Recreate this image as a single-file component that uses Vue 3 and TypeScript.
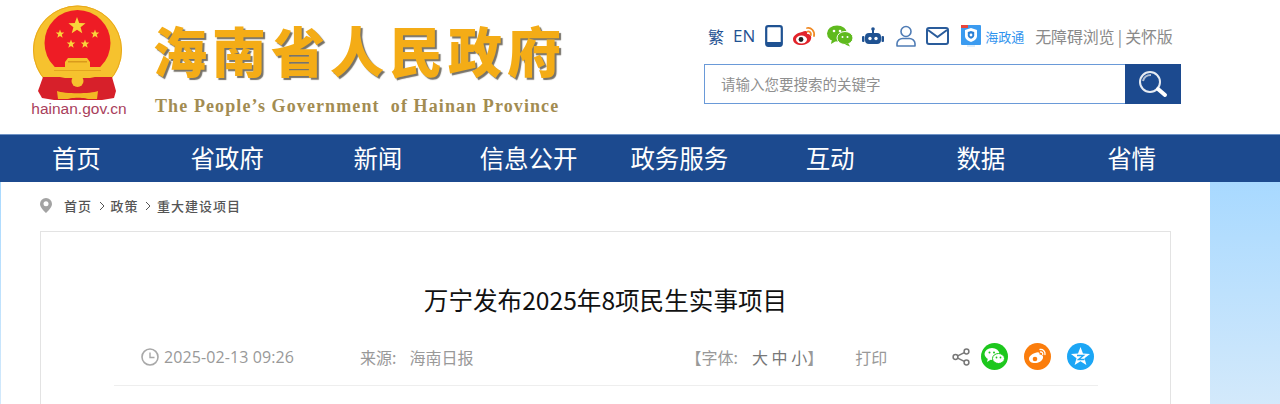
<template>
  <div class="page">
    <header class="header">
      <div class="emblem">
        <svg class="emblem-art" width="92" height="96" viewBox="0 0 92 96">
          <circle cx="45.500" cy="45" r="44.500" fill="#f6c22e" />
          <circle cx="45.500" cy="45" r="44" fill="none" stroke="#e8a91c" stroke-width="1" />
          <circle cx="45.500" cy="38" r="33" fill="#ee1c25" />
          <polygon :points="star(45, 21, 9)" fill="#f9d43a" />
          <polygon :points="star(28, 29, 4.500)" fill="#f9d43a" />
          <polygon :points="star(63, 29, 4.500)" fill="#f9d43a" />
          <polygon :points="star(39, 39, 4.500)" fill="#f9d43a" />
          <polygon :points="star(53, 39, 4.500)" fill="#f9d43a" />
          <path d="M11 72h69l4 14-2 7-12 2H22l-12-2-4-7z" fill="#d7202a" />
          <path d="M33 62v-5l3-4h19l3 4v5z" fill="#f6c22e" />
          <path d="M36 56h19v1.500H36z" fill="#d99a1c" />
          <path d="M18 62h55l5 5c-8 3-13 5-20 6H33c-7-1-12-3-20-6z" fill="#f6c22e" />
          <path d="M22 65h47v1H22z" fill="#e2a51f" />
          <circle cx="45.500" cy="76" r="6" fill="#f6c22e" />
          <path d="M25 86c7 3 34 3 41 0l-1 8H26z" fill="#f2b824" />
          <path d="M34 95c3-3 21-3 24 0z" fill="#d7202a" />
        </svg>
        <span class="emblem-url">hainan.gov.cn</span>
      </div>
      <div class="brand">
        <div class="brand-cn">海南省人民政府</div>
        <div class="brand-en">The People’s Government&nbsp; of Hainan Province</div>
      </div>
      <div class="tools">
        <div class="tool-row">
          <a class="lang">繁</a>
          <a class="lang en">EN</a>
          <svg class="ic tablet" width="18" height="22" viewBox="0 0 18 22">
            <rect x="1.200" y="1.200" width="15.600" height="19.600" rx="2" fill="none" stroke="#1f5292" stroke-width="2.200" />
            <rect x="1" y="17" width="16" height="4" rx="1" fill="#1f5292" />
          </svg>
          <svg class="ic weibo" width="24" height="22" viewBox="0 0 24 22">
            <path d="M10 7c4-2 6-1 5 2 3 0 5 2 4 5-1 4-6 6-10 6-4 0-8-2-8-6 0-3 4-6 9-7z" fill="#e2232a" />
            <ellipse cx="9.500" cy="14.500" rx="5.500" ry="4" fill="#fff" />
            <circle cx="9" cy="14.500" r="2.400" fill="#222" />
            <path d="M15 3c4-1 8 3 7 8M15.500 6.500c2-.5 3.800 1.200 3.400 3.500" fill="none" stroke="#f08a24" stroke-width="1.800" stroke-linecap="round" />
          </svg>
          <svg class="ic wechat" width="26" height="22" viewBox="0 0 26 22">
            <ellipse cx="10" cy="8.500" rx="10" ry="8" fill="#5fba1e" />
            <path d="M5 14l-1 5 5-3z" fill="#5fba1e" />
            <ellipse cx="18" cy="13" rx="8" ry="6.500" fill="#5fba1e" stroke="#fff" stroke-width="1" />
            <path d="M21 18l2 3.500-5-2z" fill="#5fba1e" />
            <circle cx="7" cy="6" r="1.300" fill="#fff" />
            <circle cx="13" cy="6" r="1.300" fill="#fff" />
            <circle cx="15.500" cy="12" r="1" fill="#fff" />
            <circle cx="20.500" cy="12" r="1" fill="#fff" />
          </svg>
          <svg class="ic robot" width="22" height="18" viewBox="0 0 22 18">
            <circle cx="11" cy="2" r="1.800" fill="#1f5292" />
            <rect x="10" y="3" width="2" height="4" fill="#1f5292" />
            <rect x="3" y="6" width="16" height="11" rx="4" fill="#1f5292" />
            <rect x="0" y="9" width="2.500" height="6" rx="1" fill="#1f5292" />
            <rect x="19.500" y="9" width="2.500" height="6" rx="1" fill="#1f5292" />
            <circle cx="8" cy="11.500" r="1.700" fill="#fff" />
            <circle cx="14" cy="11.500" r="1.700" fill="#fff" />
          </svg>
          <svg class="ic user" width="20" height="22" viewBox="0 0 20 22">
            <circle cx="10" cy="6.500" r="5" fill="none" stroke="#4f7cb5" stroke-width="1.600" />
            <path d="M1 21v-2.500c0-3 3-5 5.500-5h7c2.500 0 5.500 2 5.500 5V21z" fill="none" stroke="#4f7cb5" stroke-width="1.600" stroke-linejoin="round" />
          </svg>
          <svg class="ic mail" width="23" height="18" viewBox="0 0 23 18">
            <rect x="1" y="1" width="21" height="16" rx="2" fill="none" stroke="#2a5c9b" stroke-width="2" />
            <path d="M2 3l9.500 7L21 3" fill="none" stroke="#2a5c9b" stroke-width="2" />
          </svg>
          <svg class="ic hzt" width="20" height="22" viewBox="0 0 20 22">
            <rect width="20" height="20" rx="1" fill="#3b9bf0" />
            <rect width="7" height="3" fill="#e8453c" />
            <path d="M10 3l6 2v6c0 3-3 5-6 6-3-1-6-3-6-6V5z" fill="#fff" />
            <path d="M10 6l3.200 1v3.500c0 1.600-1.600 2.700-3.200 3.300-1.600-.6-3.200-1.700-3.200-3.300V7z" fill="#2b7fd4" />
            <circle cx="10" cy="10" r="1.400" fill="#fff" />
            <rect x="6" y="20.500" width="8" height="1" fill="#bcdcf8" />
          </svg>
          <a class="hzt-text">海政通</a>
          <a class="access">无障碍浏览 | 关怀版</a>
        </div>
        <div class="search">
          <input class="search-input" type="text" placeholder="请输入您要搜索的关键字" />
          <button class="search-btn" type="button" aria-label="搜索">
            <svg width="32" height="30" viewBox="0 0 32 30">
              <circle cx="13" cy="13" r="10" fill="none" stroke="#e6ebf2" stroke-width="2" />
              <path d="M6 12c1-4 4-6 8-6" fill="none" stroke="#aebdd3" stroke-width="2" />
              <path d="M21 20l7 6" stroke="#fff" stroke-width="4" stroke-linecap="round" />
            </svg>
          </button>
        </div>
      </div>
    </header>

    <nav class="nav">
      <div class="nav-inner">
        <a v-for="item in navItems" :key="item" class="nav-item">{{ item }}</a>
      </div>
    </nav>

    <main class="main">
      <div class="crumbs">
        <svg class="pin" width="12" height="15" viewBox="0 0 12 15">
          <path d="M6 0a6 6 0 0 1 6 6c0 3.500-4 7-6 9-2-2-6-5.500-6-9a6 6 0 0 1 6-6z" fill="#a3a3a3" />
          <circle cx="6" cy="5.800" r="2.500" fill="#fff" />
        </svg>
        <template v-for="(crumb, i) in crumbs" :key="crumb">
          <span class="crumb">{{ crumb }}</span>
          <svg v-if="i < crumbs.length - 1" class="sep" width="6" height="10" viewBox="0 0 6 10">
            <path d="M1 1l4 4-4 4" fill="none" stroke="#555" stroke-width="1" />
          </svg>
        </template>
      </div>

      <article class="card">
        <h1 class="title">万宁发布2025年8项民生实事项目</h1>
        <div class="meta">
          <svg class="clock" width="18" height="18" viewBox="0 0 18 18">
            <circle cx="9" cy="9" r="8" fill="none" stroke="#a8a8a8" stroke-width="1.600" />
            <path d="M9 4.500V9.500h4.500" fill="none" stroke="#a8a8a8" stroke-width="1.400" />
          </svg>
          <span class="date">2025-02-13 09:26</span>
          <span class="source">来源:</span>
          <span class="source-name">海南日报</span>
          <span class="font-size">【字体:</span>
          <span class="sizes">大 中 小</span>
          <span class="bracket">】</span>
          <span class="print">打印</span>
          <svg class="share" width="18" height="18" viewBox="0 0 18 18">
            <circle cx="14.500" cy="3.500" r="2.400" fill="none" stroke="#777" stroke-width="1.500" />
            <circle cx="3.500" cy="9" r="2.400" fill="none" stroke="#777" stroke-width="1.500" />
            <circle cx="14.500" cy="14.500" r="2.400" fill="none" stroke="#777" stroke-width="1.500" />
            <path d="M5.700 7.900l6.600-3.300M5.700 10.100l6.600 3.300" stroke="#777" stroke-width="1.500" />
          </svg>
          <svg class="round wx" width="27" height="27" viewBox="0 0 27 27">
            <circle cx="13.500" cy="13.500" r="13.500" fill="#1dc71d" />
            <ellipse cx="11" cy="11" rx="7.500" ry="6" fill="#fff" />
            <path d="M7 15l-1 4 4-2.500z" fill="#fff" />
            <ellipse cx="17.500" cy="15.500" rx="6" ry="5" fill="#fff" stroke="#1dc71d" stroke-width="1" />
            <circle cx="8.500" cy="9.500" r="1" fill="#1dc71d" />
            <circle cx="13" cy="9.500" r="1" fill="#1dc71d" />
            <circle cx="15.500" cy="14.500" r=".9" fill="#1dc71d" />
            <circle cx="19.500" cy="14.500" r=".9" fill="#1dc71d" />
          </svg>
          <svg class="round wb" width="27" height="27" viewBox="0 0 27 27">
            <circle cx="13.500" cy="13.500" r="13.500" fill="#fb7d0c" />
            <path d="M11 10c3-1.500 5-1 4.500 1.500 2.500 0 4 1.500 3.500 3.500-.7 3-4.500 5-8 5-3.500 0-6-1.600-6-4.300 0-2.200 2.500-4.500 6-5.700z" fill="#fff" />
            <circle cx="11" cy="16" r="2.300" fill="#fb7d0c" />
            <path d="M16 6.500c3-.5 5.500 2 5 5M16.500 9c1.500-.2 2.500 1 2.200 2.500" fill="none" stroke="#fff" stroke-width="1.300" stroke-linecap="round" />
          </svg>
          <svg class="round qz" width="27" height="27" viewBox="0 0 27 27">
            <circle cx="13.500" cy="13.500" r="13.500" fill="#1ca6f5" />
            <polygon :points="star(13.5, 14, 10)" fill="#fff" />
            <path d="M10 12.500h6.500l-5 4h6" fill="none" stroke="#1ca6f5" stroke-width="1.400" />
          </svg>
        </div>
      </article>
    </main>
  </div>
</template>

<script setup lang="ts">
const navItems = ['首页', '省政府', '新闻', '信息公开', '政务服务', '互动', '数据', '省情']
const crumbs = ['首页', '政策', '重大建设项目']

// five pointed star, used by the emblem and the qzone badge
const star = (cx: number, cy: number, r: number): string => {
  const pts: string[] = []
  for (let i = 0; i < 10; i++) {
    const radius = i % 2 === 0 ? r : r * 0.42
    const angle = -Math.PI / 2 + (i * Math.PI) / 5
    pts.push(`${(cx + radius * Math.cos(angle)).toFixed(2)},${(cy + radius * Math.sin(angle)).toFixed(2)}`)
  }
  return pts.join(' ')
}
</script>

<style scoped>
.page {
  height: 404px;
  overflow: hidden;
  font-family: "Noto Sans CJK SC", "Liberation Sans", sans-serif;
}

.header {
  display: flex;
  height: 135px;
  background: #fff;
  border-bottom: 1px solid #6f93c6;
  box-sizing: border-box;
}

.emblem {
  display: flex;
  flex-direction: column;
  align-items: center;
  width: 96px;
  margin-left: 30px;
  padding-top: 5px;
}

.emblem-url {
  margin-top: -1px;
  margin-left: 2px;
  font-family: "Liberation Sans", sans-serif;
  font-size: 15.500px;
  line-height: 17px;
  white-space: nowrap;
  color: #a9405c;
}

.brand {
  width: 420px;
  margin-left: 27px;
  padding-top: 12px;
}

.brand-cn {
  font-size: 54px;
  font-weight: 900;
  line-height: 76px;
  letter-spacing: 5px;
  color: #f4ac16;
  white-space: nowrap;
  text-shadow: 2px 2px 1px #77736a;
}

.brand-en {
  margin-top: 6px;
  margin-left: 2px;
  font-family: "Liberation Serif", serif;
  font-size: 18px;
  font-weight: 700;
  line-height: 24px;
  letter-spacing: 1.100px;
  color: #a28c52;
  white-space: nowrap;
}

.tools {
  width: 477px;
  margin-left: 131px;
  padding-top: 24px;
}

.tool-row {
  display: flex;
  align-items: center;
  height: 24px;
  margin-left: 4px;
  white-space: nowrap;
}

.lang {
  font-size: 16px;
  line-height: 24px;
  color: #1f5292;
}

.lang.en {
  margin-left: 9px;
  font-family: "Open Sans", sans-serif;
  font-size: 17px;
}

.ic {
  flex: none;
}

.tablet { margin-left: 10px; }
.weibo { margin-left: 9px; }
.wechat { margin-left: 11px; }
.robot { margin-left: 9px; }
.user { margin-left: 12px; }
.mail { margin-left: 10px; }
.hzt { margin-left: 12px; }

.hzt-text {
  margin-left: 4px;
  font-size: 13px;
  color: #2f93ee;
}

.access {
  margin-left: 11px;
  font-size: 16px;
  letter-spacing: -0.200px;
  color: #8a8a8a;
}

.search {
  display: flex;
  height: 40px;
  margin-top: 16px;
}

.search-input {
  flex: 1;
  min-width: 0;
  padding: 0 16px 2px;
  border: 1px solid #6a9ad8;
  border-right: 0;
  outline: none;
  font-family: inherit;
  font-size: 14.500px;
  background: #fff;
}

.search-input::placeholder {
  color: #8f8f8f;
  opacity: 1;
}

.search-btn {
  display: flex;
  align-items: center;
  justify-content: center;
  width: 56px;
  padding: 0;
  border: 0;
  background: #1c4a8f;
}

.nav {
  height: 47px;
  background: #1c4a8f;
}

.nav-inner {
  display: flex;
  width: 1206px;
  margin-left: 1px;
}

.nav-item {
  flex: 1;
  font-size: 24.500px;
  line-height: 46px;
  text-align: center;
  color: #fff;
}

.main {
  width: 1209px;
  height: 222px;
  margin-left: 1px;
  background: #fff;
  box-sizing: border-box;
  padding: 0 39px;
}

.crumbs {
  display: flex;
  align-items: center;
  height: 47px;
  margin-bottom: 2px;
}

.pin {
  margin-right: 12px;
}

.crumb {
  font-size: 13px;
  font-weight: 500;
  letter-spacing: 1px;
  color: #555;
}

.sep {
  margin: 0 6px 0 6.500px;
}

.card {
  width: 1131px;
  height: 200px;
  border: 1px solid #e3e3e3;
  box-sizing: border-box;
}

.title {
  margin: 0;
  padding-top: 47px;
  font-size: 24.600px;
  font-weight: 400;
  line-height: 40px;
  text-align: center;
  color: #111;
}

.meta {
  display: flex;
  align-items: center;
  height: 58px;
  margin: 9px 72px 0 73px;
  padding-left: 27px;
  border-bottom: 1px solid #eee;
  box-sizing: border-box;
  font-size: 16px;
  color: #999;
}

.clock { flex: none; }

.date {
  margin-left: 5px;
  font-family: "Open Sans", sans-serif;
  font-size: 16px;
  letter-spacing: 0.100px;
}

.source { margin-left: 66px; }
.source-name { margin-left: 13px; }
.font-size { margin-left: 212px; }
.sizes { margin-left: 14px; color: #777; }
.print { margin-left: 32px; }
.share { margin-left: 65px; flex: none; }
.round { flex: none; }
.wx { margin-left: 11px; }
.wb { margin-left: 16px; }
.qz { margin-left: 16px; }
</style>

<style>
html,
body {
  margin: 0;
  overflow: hidden;
  background: linear-gradient(#a8d9ff 182px, #d3e9fb 404px);
  background-repeat: no-repeat;
  min-height: 404px;
}
</style>
